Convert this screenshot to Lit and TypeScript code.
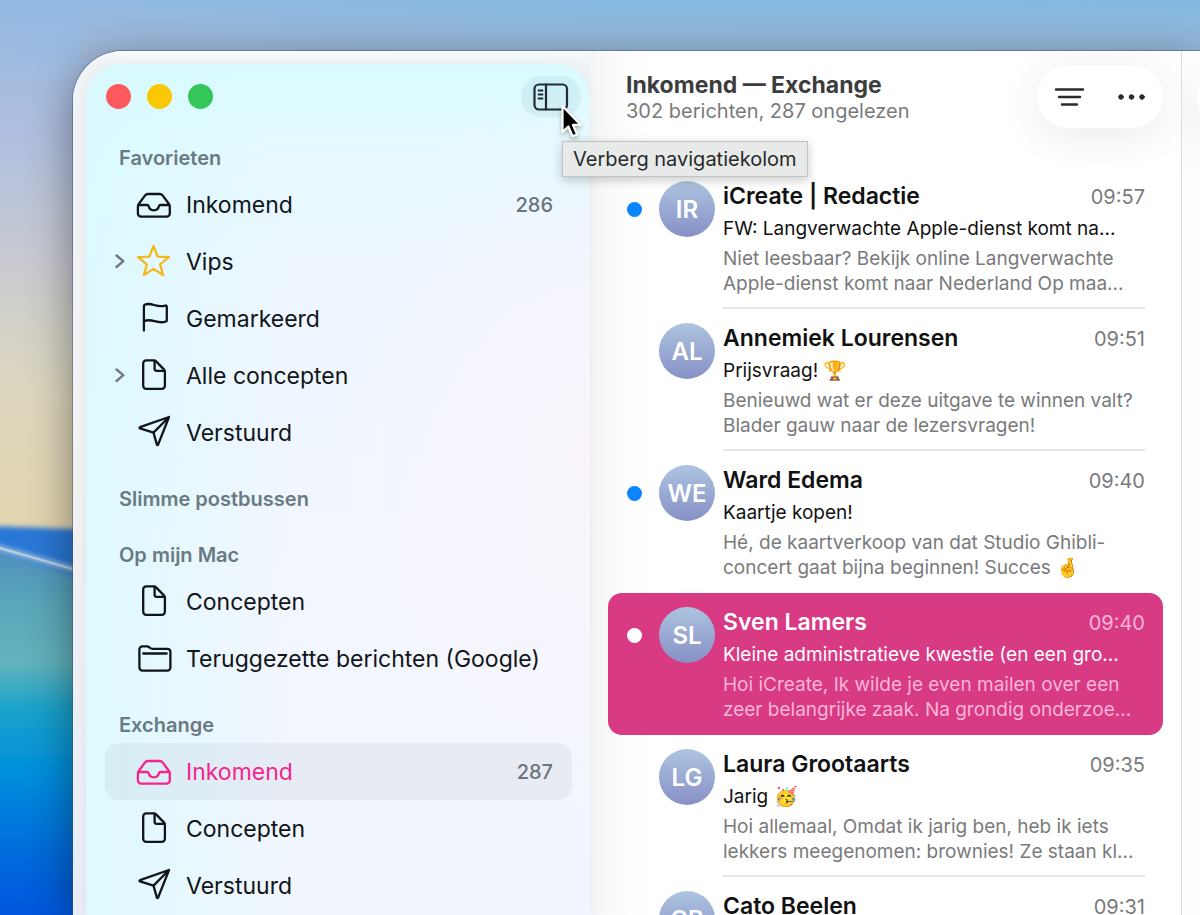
import { LitElement, html, css, svg, nothing } from "lit";
import { customElement, property } from "lit/decorators.js";
import { classMap } from "lit/directives/class-map.js";

type IconName = "inbox" | "star" | "flag" | "doc" | "send" | "folder";

interface Mailbox {
  label: string;
  icon: IconName;
  count?: number;
  expandable?: boolean;
  selected?: boolean;
}

interface MailboxGroup {
  title: string;
  items: Mailbox[];
}

interface Message {
  initials: string;
  sender: string;
  time: string;
  subject: string;
  preview: [string, string];
  unread?: boolean;
  selected?: boolean;
}

const GROUPS: MailboxGroup[] = [
  {
    title: "Favorieten",
    items: [
      { label: "Inkomend", icon: "inbox", count: 286 },
      { label: "Vips", icon: "star", expandable: true },
      { label: "Gemarkeerd", icon: "flag" },
      { label: "Alle concepten", icon: "doc", expandable: true },
      { label: "Verstuurd", icon: "send" },
    ],
  },
  { title: "Slimme postbussen", items: [] },
  {
    title: "Op mijn Mac",
    items: [
      { label: "Concepten", icon: "doc" },
      { label: "Teruggezette berichten (Google)", icon: "folder" },
    ],
  },
  {
    title: "Exchange",
    items: [
      { label: "Inkomend", icon: "inbox", count: 287, selected: true },
      { label: "Concepten", icon: "doc" },
      { label: "Verstuurd", icon: "send" },
    ],
  },
];

const MESSAGES: Message[] = [
  {
    initials: "IR",
    sender: "iCreate | Redactie",
    time: "09:57",
    subject: "FW: Langverwachte Apple-dienst komt na...",
    preview: ["Niet leesbaar? Bekijk online Langverwachte", "Apple-dienst komt naar Nederland Op maa..."],
    unread: true,
  },
  {
    initials: "AL",
    sender: "Annemiek Lourensen",
    time: "09:51",
    subject: "Prijsvraag! 🏆",
    preview: ["Benieuwd wat er deze uitgave te winnen valt?", "Blader gauw naar de lezersvragen!"],
  },
  {
    initials: "WE",
    sender: "Ward Edema",
    time: "09:40",
    subject: "Kaartje kopen!",
    preview: ["Hé, de kaartverkoop van dat Studio Ghibli-", "concert gaat bijna beginnen! Succes 🤞"],
    unread: true,
  },
  {
    initials: "SL",
    sender: "Sven Lamers",
    time: "09:40",
    subject: "Kleine administratieve kwestie (en een gro...",
    preview: ["Hoi iCreate, Ik wilde je even mailen over een", "zeer belangrijke zaak. Na grondig onderzoe..."],
    unread: true,
    selected: true,
  },
  {
    initials: "LG",
    sender: "Laura Grootaarts",
    time: "09:35",
    subject: "Jarig 🥳",
    preview: ["Hoi allemaal, Omdat ik jarig ben, heb ik iets", "lekkers meegenomen: brownies! Ze staan kl..."],
  },
  {
    initials: "CB",
    sender: "Cato Beelen",
    time: "09:31",
    subject: "",
    preview: ["", ""],
  },
];

const ICONS = {
  inbox: svg`<path d="M1.9 20V26.4a3.2 3.2 0 0 0 3.2 3.2H30.6a3.2 3.2 0 0 0 3.2-3.2V20c0-1.4-.4-2.4-1.2-3.5L26.8 8.6A4 4 0 0 0 23.6 7H12.1a4 4 0 0 0-3.2 1.6L3.1 16.5C2.3 17.6 1.9 18.6 1.9 20Z"/><path d="M2.4 18H11.2c.9 0 1.3.5 1.5 1.3.5 2.3 2.4 4 5.100 4s4.600-1.700 5.100-4c.2-.8.6-1.300 1.500-1.300H33.200"/>`,
  star: svg`<path d="M17.500 2 21.600 12.600 33 13.200 24.100 20.300 27.100 31.100 17.500 24.900 7.900 31.100 10.900 20.300 2 13.200 13.400 12.600Z"/>`,
  flag: svg`<path d="M7.900 29.500V5.200c0-.6.3-1.100.8-1.400 2-1 5.600-1 9.500.2 4 1.300 7.800 1.500 11 .6.900-.3 1.600.2 1.600 1.100V19.200c0 .8-.4 1.300-1.200 1.500-3.300.9-7 .7-11-.5-4-1.200-8-1.200-10.700 0"/>`,
  doc: svg`<path d="M10.200 2.400h7.600c1 0 1.600.3 2.300 1l7.800 8c.7.700 1 1.400 1 2.400V27.800a3 3 0 0 1-3 3H10.200a3 3 0 0 1-3-3V5.400a3 3 0 0 1 3-3Z"/><path d="M18.600 2.800V10.800a2 2 0 0 0 2 2H28.500"/>`,
  send: svg`<path d="M33 2 4 12.200c-.7.300-.7.900 0 1.200L17.500 17.600l3.400 12c.3.800.9.800 1.200 0L33 2 17.500 17.600"/>`,
  folder: svg`<path d="M3.400 26.600V8.400A3 3 0 0 1 6.400 5.400H11c1 0 1.700.3 2.400.9l.9.700c.7.600 1.300.8 2.300.8H31.400a3 3 0 0 1 3 3V26.600a3 3 0 0 1-3 3H6.400a3 3 0 0 1-3-3Z"/><path d="M7.200 12.500H30.700"/>`,
};

@customElement("mailbox-row")
export class MailboxRow extends LitElement {
  @property({ attribute: false }) box!: Mailbox;

  static styles = css`
    :host {
      display: block;
    }
    .row {
      display: grid;
      grid-template-columns: 31px 36px minmax(0, 1fr) auto;
      align-items: center;
      width: 100%;
      height: 57px;
      padding: 0 19px 0 0;
      border: 0;
      border-radius: 14px;
      background: none;
      color: #11151a;
      font: 400 23px/28px Inter, "Liberation Sans", sans-serif;
      text-align: left;
    }
    .selected {
      background: rgba(50, 50, 70, 0.055);
      color: #f5248f;
    }
    .chevron {
      display: block;
      width: 10px;
      height: 16px;
      margin-left: 10px;
      fill: none;
      stroke: #6d7a82;
      stroke-width: 2.4;
      stroke-linecap: round;
      stroke-linejoin: round;
    }
    .icon {
      width: 36px;
      height: 36px;
      fill: none;
      stroke: currentColor;
      stroke-width: 2.3;
      stroke-linecap: round;
      stroke-linejoin: round;
    }
    .star {
      color: #f4b81c;
    }
    .label {
      padding-left: 14px;
      overflow: hidden;
      white-space: nowrap;
      text-overflow: ellipsis;
    }
    .count {
      color: #69747d;
      font-size: 20px;
      font-weight: 500;
    }
  `;

  render() {
    const b = this.box;
    return html`<button class=${classMap({ row: true, selected: !!b.selected })} aria-current=${b.selected ? "true" : nothing}>
      <span>
        ${b.expandable
          ? html`<svg class="chevron" viewBox="0 0 10 16" aria-hidden="true"><path d="M1.500 1.500 8.300 7.200 1.500 13" /></svg>`
          : nothing}
      </span>
      <svg class=${classMap({ icon: true, star: b.icon === "star" })} viewBox="0 0 36 36" aria-hidden="true">${ICONS[b.icon]}</svg>
      <span class="label">${b.label}</span>
      ${b.count ? html`<span class="count">${b.count}</span>` : nothing}
    </button>`;
  }
}

@customElement("message-row")
export class MessageRow extends LitElement {
  @property({ attribute: false }) message!: Message;
  @property({ type: Boolean }) divider = false;

  static styles = css`
    :host {
      display: block;
    }
    .row {
      display: grid;
      grid-template-columns: 15px 56px minmax(0, 1fr);
      min-height: 142px;
      box-sizing: border-box;
      padding: 0 18px 0 19px;
      border-radius: 14px;
      color: #111;
      font: 400 19px/25px Inter, "Liberation Sans", sans-serif;
    }
    .dot {
      width: 15px;
      height: 15px;
      margin-top: 35px;
      border-radius: 50%;
    }
    .unread {
      background: #0a84ff;
    }
    .avatar {
      width: 56px;
      height: 56px;
      margin: 14px 0 0 17px;
      border-radius: 50%;
      background: linear-gradient(#adc4e0, #8790c6);
      color: #fff;
      font-size: 24px;
      font-weight: 600;
      line-height: 58px;
      text-align: center;
    }
    .body {
      margin-left: 25px;
      padding-top: 14px;
      border-bottom: 2px solid transparent;
    }
    .divider {
      border-color: #e6e6e7;
    }
    .top {
      display: flex;
      justify-content: space-between;
      gap: 12px;
      line-height: 30px;
    }
    .sender {
      margin: 0;
      font-size: 23px;
      font-weight: 600;
      line-height: 30px;
      overflow: hidden;
      white-space: nowrap;
      text-overflow: ellipsis;
    }
    .time,
    .preview {
      color: #7a7a7c;
    }
    .time {
      padding-top: 1px;
      font-size: 20px;
    }
    .subject {
      margin: 0 0 1px;
      line-height: 33px;
      height: 33px;
      white-space: nowrap;
      overflow: hidden;
      text-overflow: ellipsis;
    }
    .preview {
      margin: 0;
    }
    .line {
      display: block;
      height: 25px;
      white-space: nowrap;
      overflow: hidden;
      text-overflow: ellipsis;
    }
    .selected {
      background: #d83a84;
      color: #fff;
    }
    .selected .unread {
      background: #fff;
    }
    .selected .time,
    .selected .preview {
      color: #fbb5d8;
    }
  `;

  render() {
    const m = this.message;
    return html`<article class=${classMap({ row: true, selected: !!m.selected })}>
      <span class=${classMap({ dot: true, unread: !!m.unread })}></span>
      <span class="avatar">${m.initials}</span>
      <div class=${classMap({ body: true, divider: this.divider })}>
        <div class="top">
          <h3 class="sender">${m.sender}</h3>
          <time class="time">${m.time}</time>
        </div>
        <p class="subject">${m.subject}</p>
        <p class="preview">${m.preview.map((l) => html`<span class="line">${l}</span>`)}</p>
      </div>
    </article>`;
  }
}

@customElement("app-root")
export class AppRoot extends LitElement {
  static styles = css`
    :host {
      display: block;
      font-family: Inter, "Liberation Sans", sans-serif;
    }
    .desktop {
      position: relative;
      box-sizing: border-box;
      height: 100vh;
      padding: 51px 0 0 73px;
      overflow: hidden;
    }
    .wallpaper {
      position: absolute;
      inset: 0;
      width: 100%;
      height: 100%;
    }
    .window {
      position: relative;
      display: grid;
      grid-template-columns: 517px minmax(0, 1fr) 18px;
      height: 100%;
      border-radius: 50px 0 0 0;
      background: #fefefe;
      box-shadow: 0 0 0 1px rgba(50, 80, 120, 0.45), 0 12px 46px rgba(0, 0, 0, 0.45);
    }
    .side {
      position: relative;
      z-index: 1;
      min-height: 0;
      padding: 13px 0 0 13px;
      border-radius: 50px 0 0 0;
      background: linear-gradient(#f8fafb, #f0f3f6 14px, #f2f1f2 50%, #e8edf8);
    }
    .panel {
      height: 100%;
      box-sizing: border-box;
      padding: 12px 0 0;
      border-radius: 36px 34px 0 0;
      background:
        radial-gradient(ellipse 260px 380px at 100% 46%, rgba(252, 244, 252, 0.8), rgba(252, 244, 252, 0) 100%),
        linear-gradient(90deg, rgba(216, 250, 255, 0.8), rgba(226, 250, 255, 0) 40%),
        linear-gradient(#d8fbff, #e4f9ff 10%, #edf6ff 24%, #f3f6fe 60%, #f1f6fe);
      box-shadow: 0 0 12px rgba(90, 100, 120, 0.08);
    }
    .controls {
      display: flex;
      align-items: center;
      gap: 16px;
      height: 41px;
      margin-bottom: 3px;
      padding: 0 9px 0 20px;
    }
    .light {
      width: 25px;
      height: 25px;
      padding: 0;
      border: 0;
      border-radius: 50%;
    }
    .close {
      background: #fe5a5e;
    }
    .minimize {
      background: #fcc703;
    }
    .zoom {
      background: #34c658;
    }
    .toggle-wrap {
      position: relative;
      margin-left: auto;
    }
    .toggle {
      display: grid;
      place-items: center;
      width: 60px;
      height: 41px;
      padding: 0;
      border: 0;
      border-radius: 21px;
      background: rgba(30, 100, 110, 0.07);
    }
    .toggle-icon {
      width: 36px;
      height: 28px;
      fill: none;
      stroke: #1f2d33;
      stroke-width: 2.2;
      stroke-linecap: round;
    }
    .pointer {
      position: absolute;
      left: 38px;
      top: 27px;
      width: 24px;
      height: 38px;
      filter: drop-shadow(0 2px 2px rgba(0, 0, 0, 0.3));
    }
    .tooltip {
      position: absolute;
      left: 41px;
      top: 65px;
      padding: 4px 10px;
      border: 1px solid #c2c4c4;
      background: #e8eae9;
      box-shadow: 0 3px 10px rgba(0, 0, 0, 0.22);
      color: #272a2b;
      font-size: 20px;
      line-height: 26px;
      white-space: nowrap;
    }
    .nav {
      padding: 0 18px 0 19px;
    }
    .group-title {
      margin: 0;
      padding: 21px 14px 0;
      color: #6a7a83;
      font-size: 20px;
      font-weight: 600;
      line-height: 35px;
    }
    .list {
      display: flex;
      flex-direction: column;
      min-width: 0;
      min-height: 0;
      overflow: hidden;
      border-right: 1px solid #dadadb;
      background: linear-gradient(90deg, #f4f5f6, #fcfcfc 30px, #fff 60px);
    }
    .list-head {
      display: flex;
      justify-content: space-between;
      align-items: flex-start;
      box-sizing: border-box;
      height: 116px;
      flex: none;
      padding: 14px 18px 0 36px;
    }
    .heading {
      padding-top: 7px;
    }
    .title {
      margin: 0;
      color: #3c3c3d;
      font-size: 23px;
      font-weight: 700;
      line-height: 26px;
    }
    .summary {
      margin: 0;
      color: #7a7a7b;
      font-size: 20px;
      line-height: 26px;
    }
    .tools {
      display: flex;
      width: 126px;
      height: 63px;
      border-radius: 32px;
      background: #fff;
      box-shadow: 0 6px 44px rgba(0, 0, 0, 0.09);
    }
    .tool {
      display: grid;
      flex: 1;
      place-items: center;
      padding: 0;
      border: 0;
      background: none;
    }
    .tool-icon {
      width: 32px;
      height: 24px;
      fill: #2b2b2c;
      stroke: #2b2b2c;
      stroke-linecap: round;
    }
    .messages {
      padding: 0 18px;
    }
    .reader {
      overflow: hidden;
      padding: 16px 0 0 15px;
      background: linear-gradient(#fff, #f6f6f6 60px, #fefefe 130px);
    }
    .reader-tool {
      display: block;
      width: 126px;
      height: 63px;
      padding: 0;
      border: 0;
      border-radius: 32px;
      background: #fff;
    }
  `;

  private wallpaper() {
    return html`<svg class="wallpaper" viewBox="0 0 1200 915" preserveAspectRatio="xMinYMin slice" aria-hidden="true">
      <defs>
        <linearGradient id="sky" x1="0" y1="0" x2="0" y2="1">
          <stop offset="0" stop-color="#93b9e2" />
          <stop offset=".25" stop-color="#b0bfdf" />
          <stop offset=".5" stop-color="#cbcbd0" />
          <stop offset=".72" stop-color="#ddd7bf" />
          <stop offset="1" stop-color="#e3d5ae" />
        </linearGradient>
        <linearGradient id="top" x1="0" y1="0" x2="1" y2="0">
          <stop offset="0" stop-color="#84b8e0" stop-opacity="0" />
          <stop offset=".5" stop-color="#84b8e0" />
          <stop offset="1" stop-color="#82b8e1" />
        </linearGradient>
        <linearGradient id="haze" x1="0" y1="0" x2="0" y2="1">
          <stop offset="0" stop-color="#a4b8d6" stop-opacity="0" />
          <stop offset="1" stop-color="#a4b8d6" stop-opacity=".75" />
        </linearGradient>
        <linearGradient id="sea" x1="0" y1="0" x2="0" y2="1">
          <stop offset="0" stop-color="#4d8ec0" />
          <stop offset=".14" stop-color="#5aa6ba" />
          <stop offset=".3" stop-color="#62b3bd" />
          <stop offset=".42" stop-color="#1ba3cb" />
          <stop offset=".58" stop-color="#0090dc" />
          <stop offset=".8" stop-color="#006bdc" />
          <stop offset="1" stop-color="#0052de" />
        </linearGradient>
        <filter id="soft" x="-20%" y="-20%" width="140%" height="140%"><feGaussianBlur stdDeviation="2.500" /></filter>
      </defs>
      <rect width="1200" height="540" fill="url(#sky)" />
      <rect width="1200" height="60" fill="url(#top)" />
      <rect x="80" width="1120" height="60" fill="url(#haze)" />
      <path d="M-10 526 100 530V930H-10Z" fill="#2c78d6" filter="url(#soft)" />
      <path d="M-10 548 100 584V930H-10Z" fill="url(#sea)" filter="url(#soft)" />
      <path d="M-4 547 90 574" stroke="#a9c6de" stroke-width="5" filter="url(#soft)" />
      <path d="M-4 547 90 574" stroke="#b8d0e2" stroke-width="2" />
    </svg>`;
  }

  render() {
    return html`<div class="desktop">
      ${this.wallpaper()}
      <main class="window">
        <aside class="side">
          <div class="panel">
            <div class="controls">
              <button class="light close" aria-label="Sluit"></button>
              <button class="light minimize" aria-label="Minimaliseer"></button>
              <button class="light zoom" aria-label="Vergroot"></button>
              <div class="toggle-wrap">
                <button class="toggle" aria-describedby="tip" aria-label="Navigatiekolom">
                  <svg class="toggle-icon" viewBox="0 0 36 28">
                    <rect x="1.500" y="1.500" width="32.500" height="25" rx="4.500" />
                    <path d="M13 1.500V26.500" />
                    <path d="M5.500 7.500H9.500M5.500 11.500H9.500M5.500 15.500H9.500" stroke-width="1.800" />
                  </svg>
                </button>
                <svg class="pointer" viewBox="0 0 24 38" aria-hidden="true">
                  <path
                    d="M3.500 3V29L9.300 23.500 13.600 33.300 18 31.400 13.900 21.900H21.800Z"
                    fill="#000"
                    stroke="#fff"
                    stroke-width="2.200"
                    stroke-linejoin="round"
                  />
                </svg>
                <div class="tooltip" id="tip" role="tooltip">Verberg navigatiekolom</div>
              </div>
            </div>
            <nav class="nav">
              ${GROUPS.map(
                (g) => html`<section>
                  <h2 class="group-title">${g.title}</h2>
                  ${g.items.map((b) => html`<mailbox-row .box=${b}></mailbox-row>`)}
                </section>`
              )}
            </nav>
          </div>
        </aside>
        <section class="list">
          <header class="list-head">
            <div class="heading">
              <h1 class="title">Inkomend — Exchange</h1>
              <p class="summary">302 berichten, 287 ongelezen</p>
            </div>
            <div class="tools">
              <button class="tool" aria-label="Filter">
                <svg class="tool-icon" viewBox="0 0 32 24"><path d="M3 4.500H30M6 12H27M9 19.500H24" stroke-width="2.400" /></svg>
              </button>
              <button class="tool" aria-label="Meer">
                <svg class="tool-icon" viewBox="0 0 32 24">
                  <circle cx="5" cy="12" r="2.300" /><circle cx="15.500" cy="12" r="2.300" /><circle cx="26" cy="12" r="2.300" />
                </svg>
              </button>
            </div>
          </header>
          <div class="messages">
            ${MESSAGES.map(
              (m, i) =>
                html`<message-row .message=${m} .divider=${!m.selected && !MESSAGES[i + 1]?.selected}></message-row>`
            )}
          </div>
        </section>
        <section class="reader"><button class="reader-tool" aria-label="Nieuw bericht"></button></section>
      </main>
    </div>`;
  }
}
